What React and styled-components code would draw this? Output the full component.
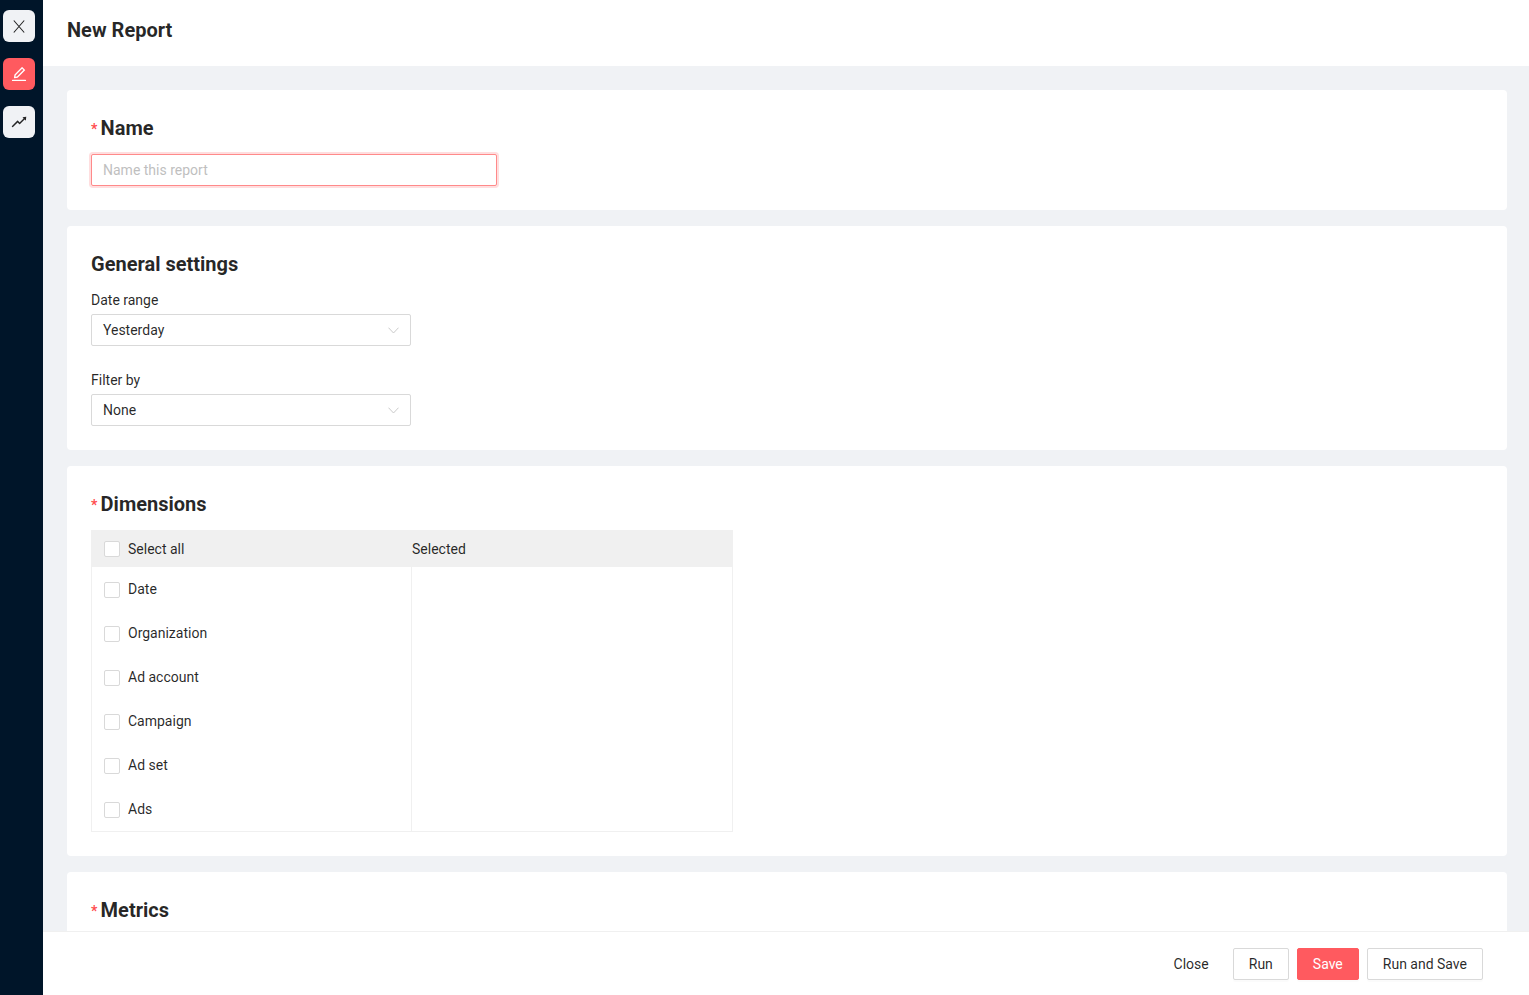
import React from "react";
import styled, { createGlobalStyle } from "styled-components";
import { AiOutlineEdit, AiOutlineRise } from "react-icons/ai";

const Global = createGlobalStyle`
  html, body { margin: 0; padding: 0; height: 100%; overflow: hidden; }
  #root { height: 100%; }
  * { box-sizing: border-box; }
  body { font-family: Roboto, "Liberation Sans", sans-serif; font-size: 14px; color: rgba(0,0,0,.85); }
`;

const Shell = styled.div`
  display: flex;
  height: 995px;
  overflow: hidden;
`;
const Sidebar = styled.nav`
  width: 43px;
  flex: none;
  background: #001529;
  padding: 10px 0 0 3px;
  display: flex;
  flex-direction: column;
  gap: 16px;
`;
const NavButton = styled.button`
  width: 32px;
  height: 32px;
  padding: 0;
  border: 0;
  border-radius: 6px;
  display: flex;
  align-items: center;
  justify-content: center;
  font-size: 18px;
  background: ${p => (p.$active ? "#ff5a5f" : "#f0f2f5")};
  color: ${p => (p.$active ? "#fff" : "rgba(0,0,0,.85)")};
`;
const Content = styled.div`
  flex: 1;
  min-width: 0;
  display: flex;
  flex-direction: column;
  background: #f0f2f5;
`;
const Header = styled.header`
  height: 66px;
  flex: none;
  background: #fff;
  padding: 16px 0 0 24px;
`;
const PageTitle = styled.h1`
  margin: 0;
  font-size: 20px;
  line-height: 28px;
  font-weight: 700;
  color: rgba(0,0,0,.85);
`;
const Body = styled.main`
  flex: 1;
  min-height: 0;
  overflow: hidden;
  padding: 24px 22px 0 24px;
  display: flex;
  flex-direction: column;
  gap: 16px;
`;
const Card = styled.section`
  flex: none;
  background: #fff;
  border-radius: 4px;
  padding: 24px;
`;
const Heading = styled.h2`
  margin: 0 0 ${p => p.$gap ?? 12}px;
  font-size: 20px;
  line-height: 28px;
  font-weight: 700;
  color: rgba(0,0,0,.85);
`;
const Star = styled.span`
  display: inline-block;
  width: 9.6px;
  color: #ff4d4f;
  font-size: 14px;
  line-height: 0;
  font-weight: 700;
  font-family: Roboto, sans-serif;
  vertical-align: 1px;
`;
const NameInput = styled.input`
  display: block;
  width: 406px;
  height: 32px;
  padding: 0 11px;
  border: 1px solid #ff8a8a;
  border-radius: 2px;
  box-shadow: 0 0 0 2px rgba(255,90,95,.2);
  font: inherit;
  outline: none;
  &::placeholder { color: #bfbfbf; opacity: 1; }
`;
const FieldLabel = styled.div`
  line-height: 22px;
  margin-bottom: 3px;
  margin-top: ${p => p.$top || 0}px;
`;
const Select = styled.div`
  width: 320px;
  height: 32px;
  border: 1px solid #d9d9d9;
  border-radius: 2px;
  padding: 0 11px;
  display: flex;
  align-items: center;
  justify-content: space-between;
  color: rgba(0,0,0,.85);
`;
const Transfer = styled.div`
  width: 642px;
`;
const TransferHead = styled.div`
  height: 37px;
  background: #f0f0f0;
  display: grid;
  grid-template-columns: 321px 1fr;
  align-items: center;
`;
const HeadCell = styled.div`
  display: flex;
  align-items: center;
  padding-left: ${p => p.$pad || 0}px;
`;
const TransferBody = styled.div`
  display: grid;
  grid-template-columns: 320px 1fr;
  border: 1px solid #f0f0f0;
  border-top: 0;
`;
const Column = styled.div`
  border-right: ${p => (p.$divider ? "1px solid #f0f0f0" : "0")};
`;
const Row = styled.label`
  height: 44px;
  display: flex;
  align-items: center;
  padding-left: 12px;
`;
const Box = styled.span`
  width: 16px;
  height: 16px;
  flex: none;
  border: 1px solid #d9d9d9;
  border-radius: 2px;
  background: #fff;
  margin-right: 8px;
  margin-top: ${p => (p.$low ? 2 : 0)}px;
`;
const Footer = styled.footer`
  height: 64px;
  flex: none;
  background: #fff;
  border-top: 1px solid #f0f0f0;
  padding: 16px 46px 0 0;
  display: flex;
  justify-content: flex-end;
  gap: 8px;
`;
const Button = styled.button`
  height: 32px;
  padding: 0 15px;
  font: inherit;
  border-radius: 2px;
  color: ${p => (p.$primary ? "#fff" : "rgba(0,0,0,.85)")};
  background: ${p => (p.$primary ? "#ff5a5f" : p.$text ? "transparent" : "#fff")};
  border: 1px solid ${p => (p.$primary ? "#ff5a5f" : p.$text ? "transparent" : "#d9d9d9")};
  box-shadow: ${p => (p.$text ? "none" : "0 2px 0 rgba(0,0,0,.015)")};
`;

const CloseIcon = () => (
  <svg width="12" height="13" viewBox="0 0 12 13" fill="none" stroke="currentColor" strokeWidth="1.1">
    <path d="M0.8 0.5 L11.2 12.5 M11.2 0.5 L0.8 12.5" />
  </svg>
);
const Chevron = () => (
  <svg width="11" height="7" viewBox="0 0 11 7" fill="none" stroke="#c4c4c4" strokeWidth="0.9">
    <path d="M0.5 0.7 L5.5 6 L10.5 0.7" />
  </svg>
);

const dims = ["Date", "Organization", "Ad account", "Campaign", "Ad set", "Ads"];

export default function App() {
  return (
    <>
      <Global />
      <Shell>
        <Sidebar>
          <NavButton><CloseIcon /></NavButton>
          <NavButton $active><AiOutlineEdit /></NavButton>
          <NavButton><AiOutlineRise /></NavButton>
        </Sidebar>
        <Content>
          <Header><PageTitle>New Report</PageTitle></Header>
          <Body>
            <Card>
              <Heading><Star>*</Star>Name</Heading>
              <NameInput placeholder="Name this report" />
            </Card>
            <Card>
              <Heading $gap={11}>General settings</Heading>
              <FieldLabel>Date range</FieldLabel>
              <Select>Yesterday<Chevron /></Select>
              <FieldLabel $top={23}>Filter by</FieldLabel>
              <Select>None<Chevron /></Select>
            </Card>
            <Card>
              <Heading><Star>*</Star>Dimensions</Heading>
              <Transfer>
                <TransferHead>
                  <HeadCell $pad={13}><Box />Select all</HeadCell>
                  <HeadCell>Selected</HeadCell>
                </TransferHead>
                <TransferBody>
                  <Column $divider>
                    {dims.map(d => <Row key={d}><Box $low />{d}</Row>)}
                  </Column>
                  <Column />
                </TransferBody>
              </Transfer>
            </Card>
            <Card>
              <Heading><Star>*</Star>Metrics</Heading>
            </Card>
          </Body>
          <Footer>
            <Button $text>Close</Button>
            <Button>Run</Button>
            <Button $primary>Save</Button>
            <Button>Run and Save</Button>
          </Footer>
        </Content>
      </Shell>
    </>
  );
}
